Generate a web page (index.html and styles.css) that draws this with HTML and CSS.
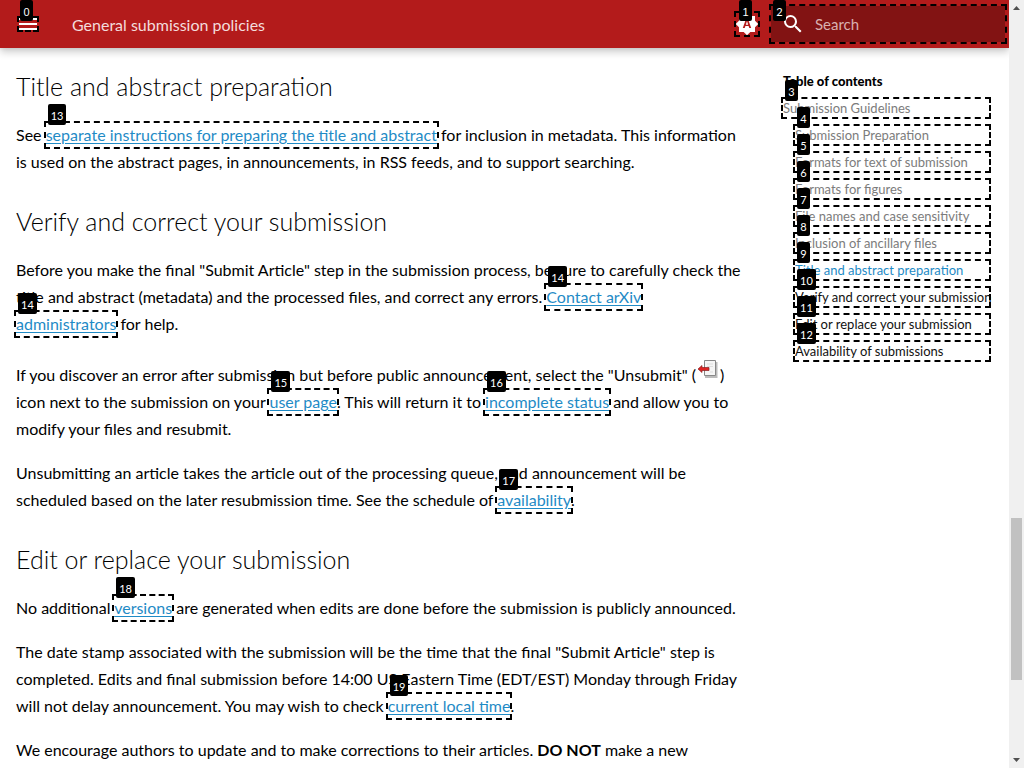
FILE: index.html
```
<!DOCTYPE html>
<html lang="en">
<head>
<meta charset="utf-8">
<title>General submission policies</title>
<link rel="stylesheet" href="styles.css">
</head>
<body>
<div class="page">
  <header class="header">
    <button class="icon-button menu" aria-label="Menu">
      <svg viewBox="0 0 24 24"><path d="M3 6h18v2H3V6m0 5h18v2H3v-2m0 5h18v2H3v-2z"/></svg>
      <span class="frame"></span><span class="tag">0</span>
    </button>
    <div class="header-title">General submission policies</div>
    <button class="icon-button theme" aria-label="Colour theme">
      <svg viewBox="0 0 24 24"><path d="M7.500 6h9v11h-9z" fill="#b31b1b"/><path fill-rule="evenodd" d="M10.85 12.65h2.3L12 9l-1.15 3.65M20 8.69V4h-4.69L12 .69 8.69 4H4v4.69L.69 12 4 15.31V20h4.69L12 23.31 15.31 20H20v-4.69L23.31 12 20 8.69M14.3 16l-.7-2h-3.2l-.7 2H7.8L11 7h2l3.2 9h-1.9z"/></svg>
      <span class="frame"></span><span class="tag">1</span>
    </button>
    <label class="search">
      <svg viewBox="0 0 24 24"><path d="M9.5 3A6.5 6.5 0 0 1 16 9.5c0 1.61-.59 3.09-1.56 4.23l.27.27h.79l5 5-1.5 1.5-5-5v-.79l-.27-.27A6.516 6.516 0 0 1 9.5 16 6.5 6.5 0 0 1 3 9.5 6.5 6.5 0 0 1 9.5 3m0 2C7 5 5 7 5 9.5S7 14 9.5 14 14 12 14 9.5 12 5 9.5 5z"/></svg>
      <input type="text" placeholder="Search" aria-label="Search">
      <span class="tag">2</span>
    </label>
  </header>
  <div class="columns">
    <main class="article">
      <h2>Title and abstract preparation</h2>
      <p>See <a href="#prep"><span class="mark">separate instructions for preparing the title and abstract<span class="tag">13</span></span></a> for inclusion in metadata. This information<br>is used on the abstract pages, in announcements, in RSS feeds, and to support searching.</p>
      <h2>Verify and correct your submission</h2>
      <p>Before you make the final "Submit Article" step in the submission process, be sure to carefully check the<br>title and abstract (metadata) and the processed files, and correct any errors. <a href="#contact"><span class="mark">Contact arXiv<span class="tag">14</span></span><br><span class="mark">administrators<span class="tag">14</span></span></a> for help.</p>
      <p>If you discover an error after submission but before public announcement, select the "Unsubmit" (<svg class="unsubmit" viewBox="0 0 22 22" role="img" aria-label="Unsubmit"><path d="M8 3h12.500v16H8z" fill="#bbb"/><path d="M7.500 1.500h11v15h-11z" fill="#f5f5f5" stroke="#888"/><path d="M10 5h6M10 7.500h6M13 13h3" stroke="#ddd"/><path d="M1 10l4-3.500v2h7v3H5v2z" fill="#d22" stroke="#822" stroke-width=".7"/></svg>)<br>icon next to the submission on your <a href="#user"><span class="mark">user page<span class="tag">15</span></span></a>. This will return it to <a href="#status"><span class="mark">incomplete status<span class="tag">16</span></span></a> and allow you to<br>modify your files and resubmit.</p>
      <p>Unsubmitting an article takes the article out of the processing queue, and announcement will be<br>scheduled based on the later resubmission time. See the schedule of <a href="#availability"><span class="mark">availability<span class="tag">17</span></span></a>.</p>
      <h2>Edit or replace your submission</h2>
      <p>No additional <a href="#versions"><span class="mark">versions<span class="tag">18</span></span></a> are generated when edits are done before the submission is publicly announced.</p>
      <p>The date stamp associated with the submission will be the time that the final "Submit Article" step is<br>completed. Edits and final submission before 14:00 US Eastern Time (EDT/EST) Monday through Friday<br>will not delay announcement. You may wish to check <a href="#time"><span class="mark">current local time<span class="tag">19</span></span></a>.</p>
      <p>We encourage authors to update and to make corrections to their articles. <strong>DO NOT</strong> make a new</p>
    </main>
    <nav class="toc" aria-labelledby="toc-title">
      <div class="toc-title" id="toc-title">Table of contents</div>
      <a class="passed" href="#t1">Submission Guidelines<span class="tag">3</span></a>
      <div class="toc-sub">
        <a class="passed" href="#t2">Submission Preparation<span class="tag">4</span></a>
        <a class="passed" href="#t3">Formats for text of submission<span class="tag">5</span></a>
        <a class="passed" href="#t4">Formats for figures<span class="tag">6</span></a>
        <a class="passed" href="#t5">File names and case sensitivity<span class="tag">7</span></a>
        <a class="passed" href="#t6">Inclusion of ancillary files<span class="tag">8</span></a>
        <a class="active" href="#t7">Title and abstract preparation<span class="tag">9</span></a>
        <a href="#t8">Verify and correct your submission<span class="tag">10</span></a>
        <a href="#t9">Edit or replace your submission<span class="tag">11</span></a>
        <a href="#t10">Availability of submissions<span class="tag">12</span></a>
      </div>
    </nav>
  </div>
</div>
<div class="scrollbar" aria-hidden="true">
  <svg viewBox="0 0 15 15"><path d="M4 10h7L7.500 6z"/></svg>
  <div class="track"><div class="thumb"></div></div>
  <svg viewBox="0 0 15 15"><path d="M4 5h7L7.500 9z"/></svg>
</div>
</body>
</html>
```
FILE: styles.css
```
* { box-sizing: border-box; }
body {
  margin: 0;
  display: flex;
  height: 100vh;
  overflow: hidden;
  font: 16px/27px Lato, "Open Sans", sans-serif;
  color: #000;
  background: #fff;
}
.page { flex: 1; min-width: 0; overflow: hidden; }
.header {
  position: relative;
  display: flex;
  align-items: center;
  height: 48px;
  padding: 0 4px 0 16px;
  background: #b31b1b;
  color: #f3dcdc;
  box-shadow: 0 0 4px rgba(0,0,0,.1), 0 4px 8px rgba(0,0,0,.2);
}
.header svg { display: block; width: 24px; height: 24px; fill: #fff; }
.header-title { flex: 1; padding-left: 32px; font-size: 16px; }
.icon-button {
  position: relative;
  width: 24px;
  height: 24px;
  padding: 0;
  border: 0;
  background: none;
}
.theme { margin-right: 12px; }
.frame { position: absolute; inset: -1px; border: 2px dashed #000; }
.menu .frame { inset: 4px 1px; }
.header .tag { top: -12px; left: 4px; }
.search {
  position: relative;
  display: flex;
  align-items: center;
  width: 234px;
  height: 36px;
  padding-left: 10px;
  background: #821313;
  outline: 2px dashed #000;
}
.header .search .tag { top: -6px; left: 2px; }
.search input {
  flex: 1;
  min-width: 0;
  margin-left: 10px;
  padding: 0;
  border: 0;
  outline: 0;
  background: none;
  color: #fff;
  font: inherit;
  font-size: 15px;
}
.search input::placeholder { color: #d9b0b0; opacity: 1; }
.tag {
  position: absolute;
  top: -19px;
  left: 2px;
  z-index: 1;
  min-width: 13px;
  height: 21px;
  padding: 2px 3px 0;
  border-radius: 2px;
  background: #000;
  color: #fff;
  font-size: 11px;
  line-height: 20px;
  text-align: center;
}
.columns { display: flex; padding: 20px 20px 0 16px; }
.article { flex: 1; min-width: 0; white-space: nowrap; }
h2 { margin: 28px 0 17px; font-size: 25px; line-height: 36px; font-weight: 300; }
h2:first-child { margin-top: 0; }
p { margin: 0 0 17px; }
p a { color: #1f8bc6; text-underline-offset: 2px; }
.mark { position: relative; padding: 2px 0 3px; outline: 2px dashed #000; }
.unsubmit { width: 22px; height: 22px; margin: 5px 1px 0; }
.toc { width: 206px; font-size: 13px; line-height: 18px; white-space: nowrap; }
.toc-title { margin: 4px 0 9px; font-weight: 900; }
.toc a {
  position: relative;
  display: block;
  margin-bottom: 9px;
  color: #111;
  text-decoration: none;
  outline: 2px dashed #000;
}
.toc a.passed { color: #7c7c7c; }
.toc a.active { color: #1f8bc6; }
.toc-sub { padding-left: 12px; }
.scrollbar { display: flex; flex-direction: column; width: 15px; background: #f0f0f0; }
.scrollbar svg { width: 15px; height: 15px; fill: #505050; }
.track {
  flex: 1;
  display: grid;
  grid-template-rows: 503fr 162fr 73fr;
  padding: 0 2px;
}
.thumb { grid-row: 2; background: #c1c1c1; }
```
